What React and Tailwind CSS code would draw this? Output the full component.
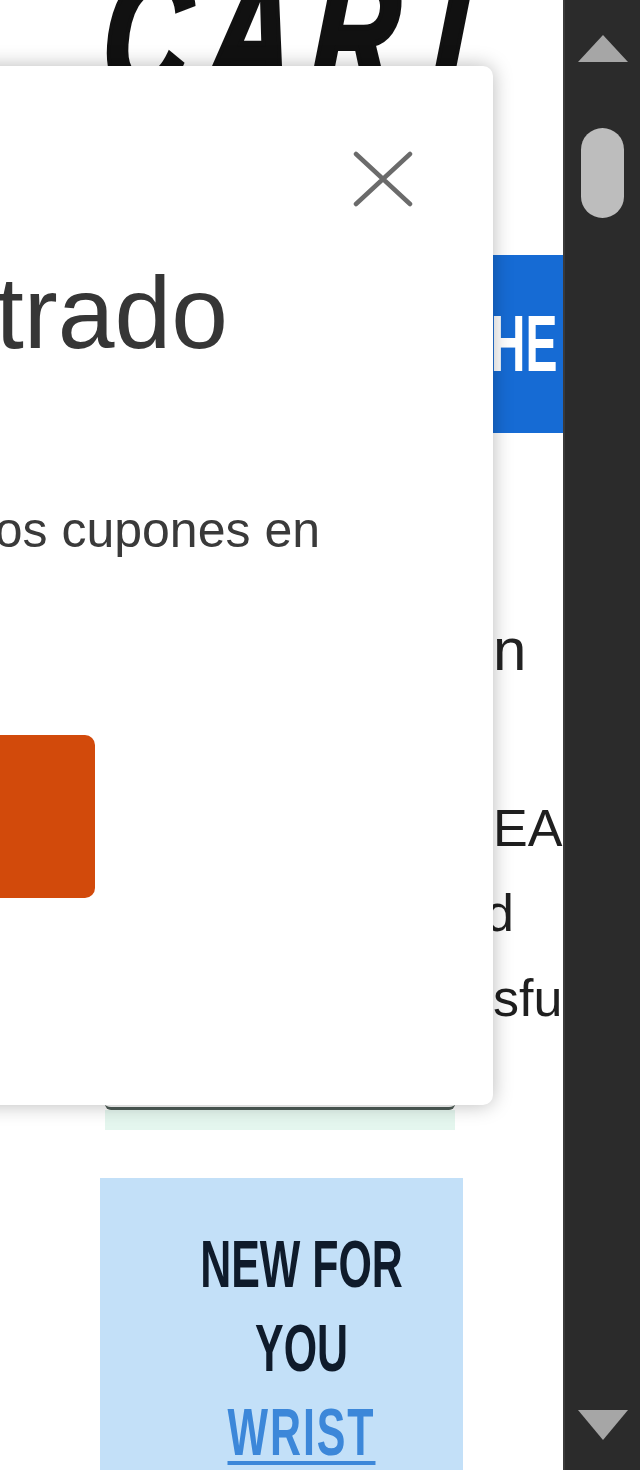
export default function App() {
  return (
    <div className="flex w-[640px] h-[1470px] overflow-hidden bg-white">
      <main className="relative w-[563px] h-[1470px] shrink-0 overflow-hidden bg-white font-['Liberation_Sans',Arial,sans-serif]">
        <header className="h-[110px] overflow-hidden">
          <div className="mt-[-57px] ml-[104px] w-max origin-left scale-x-[0.66] -skew-x-[6deg] whitespace-nowrap text-[180px] leading-none font-bold italic tracking-[28px] text-[#111] [-webkit-text-stroke:6px_#111]">
            CART
          </div>
        </header>

        <section className="mt-[145px] ml-[40px] h-[178px] bg-[#166bd4] flex items-center justify-end pr-[6px] overflow-hidden">
          <span className="shrink-0 whitespace-nowrap origin-right scale-x-[0.6] text-[80px] leading-none font-bold text-white">
            SHOP THE
          </span>
        </section>

        <div className="mt-[181px] flex whitespace-nowrap text-[60px] leading-[72px] text-[#222]">
          <span className="w-[493px] shrink-0 flex justify-end">Already a member? Sign i</span>
          <span>n</span>
        </div>

        <div className="mt-[100px] whitespace-nowrap text-[52px] leading-[85px] text-[#1f1f1f]">
          <div className="flex">
            <span className="w-[493px] shrink-0 flex justify-end">Free shipping in your AR</span>
            <span>EA</span>
          </div>
          <div className="flex">
            <span className="w-[485px] shrink-0 flex justify-end">Easy returns on everything you ordere</span>
            <span>d</span>
          </div>
          <div className="flex">
            <span className="w-[493px] shrink-0 flex justify-end">Your order was placed succes</span>
            <span>sfully</span>
          </div>
        </div>

        <div className="ml-[105px] w-[350px] h-[69px] border-b-[3px] border-[#4f5d57] rounded-b-[6px]"></div>
        <div className="ml-[105px] w-[350px] h-[20px] bg-[#e4f6ee]"></div>

        <div className="mt-[48px] ml-[100px] w-[363px] h-[320px] bg-[#c3e0f8] pt-[44px] pl-[40px]">
          <div className="origin-center scale-x-[0.65] text-center font-bold text-[66px] leading-[84px] text-[#0f1b2b] uppercase">
            <p>New for</p>
            <p>you</p>
            <p>
              <a className="tracking-[3px] text-[#3c87d9] underline decoration-[4px] underline-offset-[6px]">Wrist</a>
            </p>
          </div>
        </div>

        <div className="absolute left-[-400px] top-[66px] w-[893px] h-[1039px] bg-white rounded-[10px] shadow-[0_0_20px_rgba(0,0,0,0.28)] text-[#363636]">
          <div className="flex justify-end pt-[85px] pr-[80px]">
            <button aria-label="Cerrar">
              <svg width="60" height="56" viewBox="0 0 60 56">
                <path d="M3 3 L57 53 M57 3 L3 53" stroke="#6b6b6b" strokeWidth="4.5" strokeLinecap="round" fill="none" />
              </svg>
            </button>
          </div>
          <h2 className="mt-[48px] w-[628px] flex justify-end whitespace-nowrap text-[102px] leading-[116px]">
            Ya estás registrado
          </h2>
          <p className="mt-[124px] w-[720px] flex justify-end whitespace-nowrap text-[50px] leading-[70px] text-[#3a3a3a]">
            Revisa tu correo para ver todos los cupones en
          </p>
          <div className="mt-[170px] w-[495px] flex justify-end">
            <button className="w-[600px] h-[163px] shrink-0 rounded-[10px] bg-[#d24a0b] text-white text-[40px] font-bold">
              Ver mis cupones
            </button>
          </div>
        </div>
      </main>

      <aside className="w-[77px] h-[1470px] shrink-0 bg-[#2b2b2b] border-l-2 border-[#3a3a3a] flex flex-col items-center pt-[35px] pb-[30px]">
        <svg width="50" height="27" viewBox="0 0 50 27">
          <polygon points="25,0 50,27 0,27" fill="#a6a6a6" />
        </svg>
        <div className="mt-[66px] w-[43px] h-[90px] rounded-full bg-[#bdbdbd]"></div>
        <div className="flex-1"></div>
        <svg width="50" height="30" viewBox="0 0 50 30">
          <polygon points="0,0 50,0 25,30" fill="#a6a6a6" />
        </svg>
      </aside>
    </div>
  );
}
